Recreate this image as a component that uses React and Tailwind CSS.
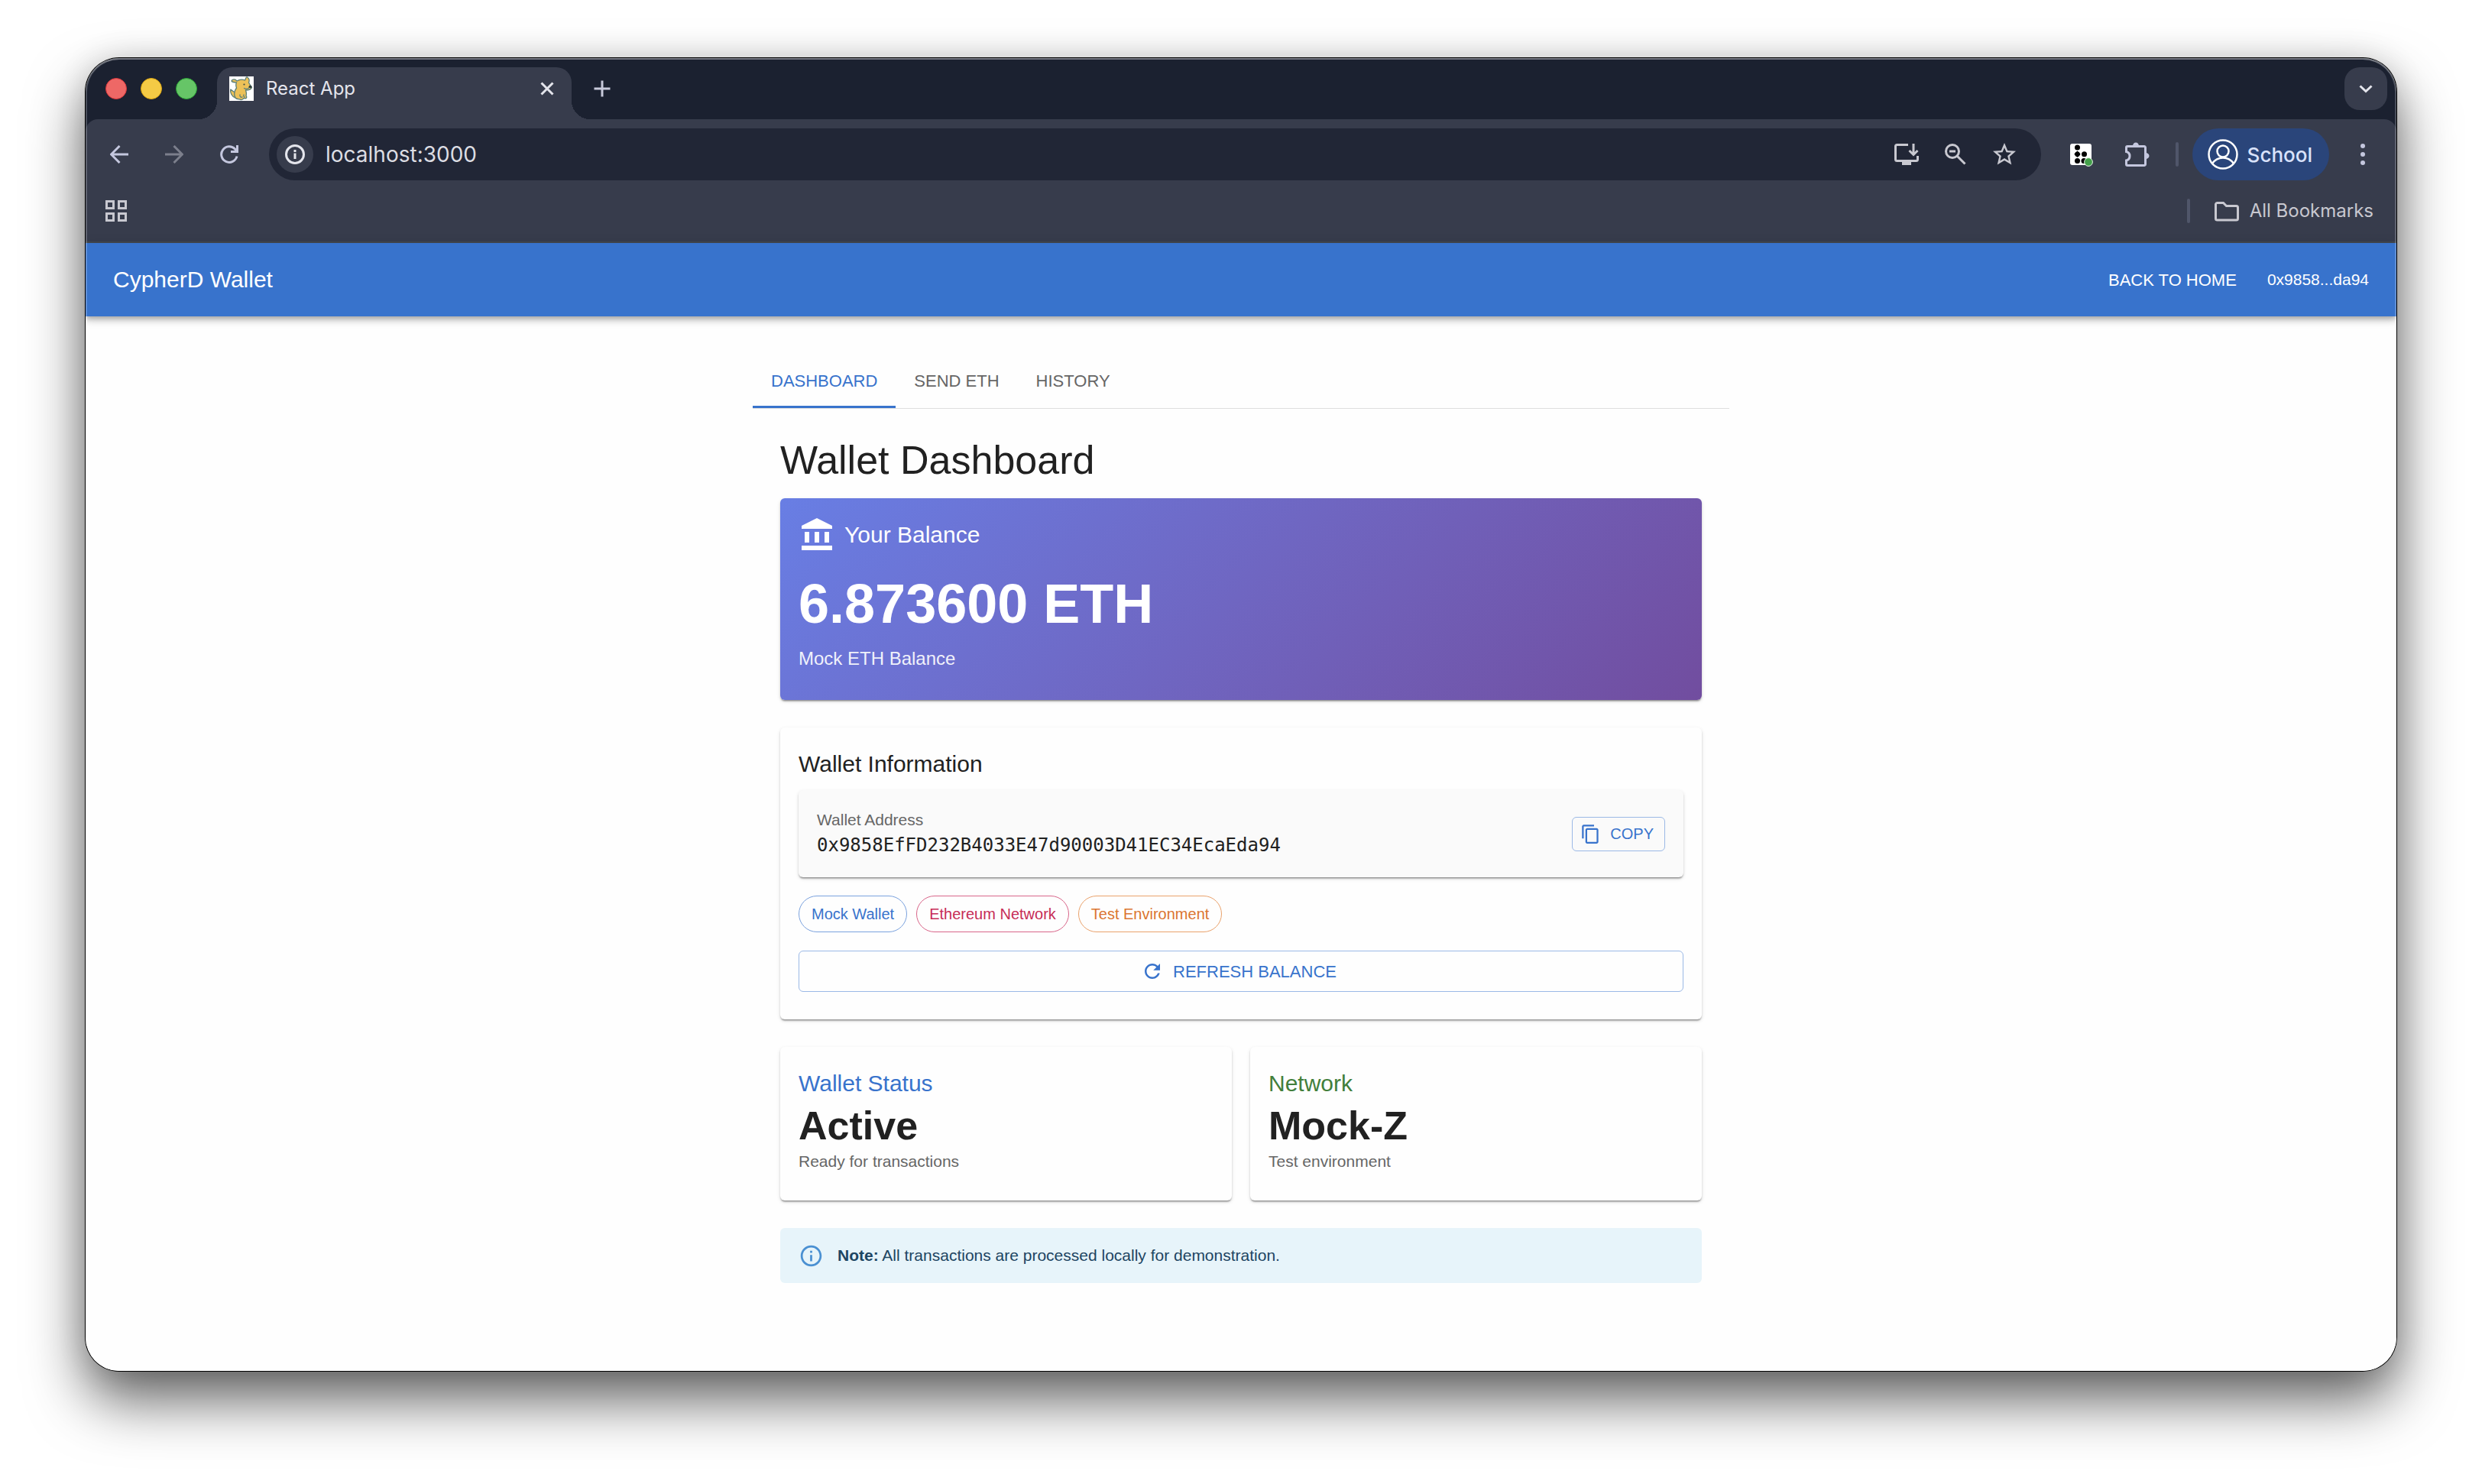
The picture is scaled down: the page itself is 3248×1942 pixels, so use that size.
import React from "react";

const ICON_BUTTON = "flex h-14 w-14 shrink-0 items-center justify-center rounded-full";
const CARD_SHADOW =
  "shadow-[0_3px_2px_-2px_rgba(0,0,0,0.3),0_2px_2px_0_rgba(0,0,0,0.16),0_2px_5px_0_rgba(0,0,0,0.12)]";

function Stroke({ size = 40, width = 3, className = "", children }) {
  return (
    <svg
      width={size}
      height={size}
      viewBox={`0 0 ${size} ${size}`}
      fill="none"
      stroke="currentColor"
      strokeWidth={width}
      className={className}
      aria-hidden="true"
    >
      {children}
    </svg>
  );
}

function Filled({ className, d }) {
  return (
    <svg viewBox="0 0 24 24" fill="currentColor" className={className} aria-hidden="true">
      <path d={d} />
    </svg>
  );
}

function PuppyIcon() {
  return (
    <svg width="32" height="32" viewBox="0 0 32 32" aria-hidden="true" className="shrink-0">
      <rect width="32" height="32" fill="#fff" />
      <g fill="#ecc158" stroke="#5b7f78" strokeWidth="1.3" strokeLinejoin="round" strokeLinecap="round">
        <path d="M8 28 C3 26 0.800 21 1.800 17 C4 18 5 21 9 20.500" />
        <path d="M10 6 C8 3 3.500 3.500 3 6 C3.500 8 7 7.500 9.500 8 C8 11 9 13 9.500 15 C6.500 19 6 24 8 28 C10 30.500 14 29.500 15 30.500 C17.500 31 18 28.500 20 28.500 C22.500 29.500 23.500 27 22 25.500 C23 22 22 20 21.500 18 C25 18 28.500 17 29.500 14.500 C28 12 26.500 10 25.500 8 C27 5 25.500 2 23.500 1 C21 0.500 22 4 20.500 5 C17 3.500 13 4 10 6 Z" />
        <path d="M14 24 C13.500 26 15 28 17 27 M19 24 C18.500 25 19 27 20 27" fill="none" />
        <path d="M19.500 15.500 C22 17 25 16.500 26 14.500" fill="none" />
      </g>
      <circle cx="19.500" cy="10.500" r="1.100" fill="#3c4a48" />
      <ellipse cx="27.500" cy="13.500" rx="2" ry="1.800" fill="#2f3d3c" />
    </svg>
  );
}

function TabStrip() {
  return (
    <div className="flex h-20 items-start bg-[#1b2130] pl-[26px] pr-3 pt-3">
      <div className="flex h-14 items-center gap-[18px]">
        <button aria-label="Close window" className="h-7 w-7 rounded-full border border-[#d9383c] bg-[#ee6866]" />
        <button aria-label="Minimize window" className="h-7 w-7 rounded-full border border-[#dba510] bg-[#f4ca45]" />
        <button aria-label="Zoom window" className="h-7 w-7 rounded-full border border-[#2ca436] bg-[#66c567]" />
      </div>
      <div className="ml-0.5 h-6 w-6 self-end bg-[radial-gradient(circle_at_0_0,transparent_24px,#373c4c_24px)]" />
      <div className="flex h-[68px] w-[464px] items-center rounded-t-[20px] bg-[#373c4c] pb-3 pl-4 pr-5">
        <PuppyIcon />
        <span className="ml-4 flex-1 text-2xl text-[#e4e5ec]">React App</span>
        <button aria-label="Close tab" className="flex h-6 w-6 items-center justify-center text-[#e4e5ec]">
          <Stroke size={24}>
            <path d="M4.500 4.500 19.500 19.500 M19.500 4.500 4.500 19.500" />
          </Stroke>
        </button>
      </div>
      <div className="h-6 w-6 self-end bg-[radial-gradient(circle_at_100%_0,transparent_24px,#373c4c_24px)]" />
      <button aria-label="New tab" className="flex h-14 w-8 items-center justify-center text-[#c8cadb]">
        <Stroke size={24}>
          <path d="M12 1.500V22.500 M1.500 12H22.500" />
        </Stroke>
      </button>
      <button
        aria-label="Search tabs"
        className="ml-auto flex h-14 w-14 items-center justify-center rounded-[20px] bg-[#373c4c] text-[#e4e5ec]"
      >
        <Stroke size={24}>
          <path d="M4.500 8.500 12 15.500 19.500 8.500" />
        </Stroke>
      </button>
    </div>
  );
}

function Toolbar() {
  return (
    <div className="bg-[#1b2130]">
      <div className="flex items-center rounded-t-[16px] bg-[#373c4c] px-4 pt-3">
        <div className="flex gap-4">
          <button aria-label="Back" className={`${ICON_BUTTON} text-[#c4c7de]`}>
            <Stroke size={24}>
              <path d="M24 12H2 M12.500 1 1.500 12 12.500 23" />
            </Stroke>
          </button>
          <button aria-label="Forward" className={`${ICON_BUTTON} text-[#7c7f8c]`}>
            <Stroke size={24}>
              <path d="M0 12H22 M11.500 1 22.500 12 11.500 23" />
            </Stroke>
          </button>
          <button aria-label="Reload" className={`${ICON_BUTTON} text-[#c4c7de]`}>
            <Stroke size={24}>
              <path d="M22 14.500 A10.300 10.300 0 1 1 19.500 5 L22 8 M22.500 0 V8.500 H14" />
            </Stroke>
          </button>
        </div>
        <div className="ml-6 flex h-[68px] flex-1 items-center rounded-full bg-[#212636] pl-2.5 pr-7 text-[#c8c8d0]">
          <button
            aria-label="View site information"
            className="flex h-12 w-12 shrink-0 items-center justify-center rounded-full bg-[#373c4c] text-[#e4e5ec]"
          >
            <Stroke size={28}>
              <circle cx="14" cy="14" r="11.500" />
              <path d="M14 12.500V20 M14 8V11" />
            </Stroke>
          </button>
          <input
            aria-label="Address and search bar"
            defaultValue="localhost:3000"
            className="ml-4 min-w-0 flex-1 bg-transparent text-[28px] text-[#dcdde3] outline-none"
          />
          <div className="flex items-center gap-6">
            <button aria-label="Install app">
              <Stroke>
                <path d="M22 7.500H7.500a2 2 0 0 0-2 2V26.500a2 2 0 0 0 2 2H32.500a2 2 0 0 0 2-2V22" />
                <path d="M29 6V20 M23.500 15 29 20.500 34.500 15" />
                <path d="M14 29H26V34H14Z" fill="currentColor" stroke="none" />
              </Stroke>
            </button>
            <button aria-label="Zoom level">
              <Stroke>
                <circle cx="16" cy="16" r="8.500" />
                <path d="M22 22 32.500 32.500 M12 16H20" />
              </Stroke>
            </button>
            <button aria-label="Bookmark this page" className="flex h-10 w-10 items-center justify-center">
              <Filled
                className="h-9 w-9"
                d="m22 9.240-7.190-.620L12 2 9.190 8.630 2 9.240l5.460 4.730L5.820 21 12 17.270 18.180 21l-1.630-7.030L22 9.240zM12 15.400l-3.760 2.270 1-4.280-3.320-2.880 4.380-.380L12 6.100l1.710 4.040 4.380.380-3.320 2.880 1 4.280L12 15.400z"
              />
            </button>
          </div>
        </div>
        <button aria-label="Dots extension" className={`${ICON_BUTTON} ml-6`}>
          <svg width="32" height="32" viewBox="-2 -2 32 32" aria-hidden="true">
            <rect width="28" height="28" rx="3" fill="#fff" />
            <g fill="#000">
              <circle cx="9.500" cy="5" r="3.500" />
              <path d="M9.500 9.500 13.700 13.700 9.500 17.900 5.300 13.700Z" />
              <circle cx="9.500" cy="13.700" r="3.200" />
              <circle cx="18.500" cy="13.700" r="3.500" />
              <circle cx="9.500" cy="22.500" r="3.500" />
              <circle cx="18" cy="22.500" r="3.500" />
            </g>
            <circle cx="24" cy="24" r="5.400" fill="#43a04a" stroke="#e6f4e6" />
          </svg>
        </button>
        <button aria-label="Extensions" className={`${ICON_BUTTON} ml-[18px] text-[#c4c7de]`}>
          <Stroke size={32}>
            <path d="M1.500 12.500V7a1.500 1.500 0 0 1 1.500-1.500H25A1.500 1.500 0 0 1 26.500 7V29A1.500 1.500 0 0 1 25 30.500H3A1.500 1.500 0 0 1 1.500 29V24C7.500 22.500 7.500 14 1.500 12.500Z" />
            <path d="M10 5a4 4.500 0 0 1 8 0ZM27 14a4.500 4 0 0 1 0 8Z" fill="currentColor" stroke="none" />
          </Stroke>
        </button>
        <div className="ml-[22px] h-8 w-1 rounded-full bg-[#50566a]" />
        <button className="ml-[18px] flex h-[68px] items-center gap-3 rounded-full bg-[#2a457a] pl-5 pr-[22px] text-[#d9e2fb]">
          <Stroke width={2.5} className="text-white">
            <circle cx="20" cy="20" r="18.500" />
            <circle cx="20" cy="16" r="7.500" />
            <path d="M6 32 C13 22 27 22 34 32" />
          </Stroke>
          <span className="text-[26px] font-medium">School</span>
        </button>
        <button aria-label="Menu" className={`${ICON_BUTTON} ml-4 text-[#c4c7de]`}>
          <svg width="6" height="30" viewBox="0 0 6 30" fill="currentColor" aria-hidden="true">
            <circle cx="3" cy="4" r="3" />
            <circle cx="3" cy="15" r="3" />
            <circle cx="3" cy="26" r="3" />
          </svg>
        </button>
      </div>
      <div className="flex h-[82px] items-center border-b-2 border-[#444950] bg-[#373c4c] pl-[26px] pr-[30px] text-[#c8c8d0]">
        <button aria-label="Apps">
          <Stroke size={28}>
            <path d="M1.500 1.500H10.500V10.500H1.500Z M17.500 1.500H26.500V10.500H17.500Z M1.500 17.500H10.500V26.500H1.500Z M17.500 17.500H26.500V26.500H17.500Z" />
          </Stroke>
        </button>
        <div className="ml-auto h-8 w-1 rounded-full bg-[#50566a]" />
        <button className="ml-8 flex items-center gap-3.5 text-2xl">
          <Stroke size={32}>
            <path d="M1.500 7A2 2 0 0 1 3.500 5.500H11.500L15.500 9.500H28.500A2 2 0 0 1 30.500 11.500V26A2 2 0 0 1 28.500 28H3.500A2 2 0 0 1 1.500 26Z" />
          </Stroke>
          All Bookmarks
        </button>
      </div>
    </div>
  );
}

function AppBar() {
  return (
    <header className="relative flex h-24 items-center bg-[#3873cc] px-9 text-white shadow-[0_3px_6px_-1px_rgba(0,0,0,0.2),0_6px_8px_0_rgba(0,0,0,0.14),0_2px_15px_0_rgba(0,0,0,0.12)]">
      <h1 className="flex-1 text-[30px] leading-[48px]">CypherD Wallet</h1>
      <button className="px-3 text-[22px]">BACK TO HOME</button>
      <span className="ml-7 text-[21px]">0x9858...da94</span>
    </header>
  );
}

function Tabs() {
  return (
    <div role="tablist" className="flex h-[73px] border-b border-[#dfdfdf] text-[22px] text-[#666]">
      <button role="tab" aria-selected="true" className="border-b-[3px] border-[#3873cc] px-6 pt-[3px] text-[#3873cc]">
        DASHBOARD
      </button>
      <button role="tab" aria-selected="false" className="px-6">
        SEND ETH
      </button>
      <button role="tab" aria-selected="false" className="px-6">
        HISTORY
      </button>
    </div>
  );
}

function BalanceCard() {
  return (
    <section
      className={`rounded-md bg-linear-135 from-[#687ee4] to-[#714d9f] px-6 pb-9 pt-6 text-white ${CARD_SHADOW}`}
    >
      <div className="flex items-center gap-3">
        <Filled
          className="h-12 w-12"
          d="M4 10h3v7H4zM10.500 10h3v7h-3zM2 19h20v3H2zM17 10h3v7h-3zM12 1 2 6v2h20V6z"
        />
        <h3 className="text-[30px] leading-[48px]">Your Balance</h3>
      </div>
      <p className="mt-6 text-[72px] font-bold leading-[84px]">6.873600 ETH</p>
      <p className="mt-3 text-2xl leading-9 opacity-90">Mock ETH Balance</p>
    </section>
  );
}

function InfoCard() {
  return (
    <section className={`mt-9 rounded-md bg-[#fefefe] px-6 pb-9 pt-6 ${CARD_SHADOW}`}>
      <h3 className="text-[30px] leading-[48px]">Wallet Information</h3>
      <div className={`mt-2.5 flex items-center justify-between rounded-md bg-[#fafafa] p-6 ${CARD_SHADOW}`}>
        <div>
          <p className="text-[21px] leading-[30px] text-[#666]">Wallet Address</p>
          <p className="font-['DejaVu_Sans_Mono',monospace] text-2xl leading-9">
            0x9858EfFD232B4033E47d90003D41EC34EcaEda94
          </p>
        </div>
        <button className="flex h-[45px] items-center gap-3 rounded-md border border-[#9bb9e6] pl-2.5 pr-3.5 text-xl text-[#3873cc]">
          <Filled
            className="h-[27px] w-[27px]"
            d="M16 1H4c-1.100 0-2 .900-2 2v14h2V3h12V1zm3 4H8c-1.100 0-2 .900-2 2v14c0 1.100.900 2 2 2h11c1.100 0 2-.900 2-2V7c0-1.100-.900-2-2-2zm0 16H8V7h11v14z"
          />
          COPY
        </button>
      </div>
      <div className="mt-6 flex gap-3 text-xl">
        <span className="flex h-12 items-center rounded-full border border-[#7ba2de] px-4 text-[#3873cc]">
          Mock Wallet
        </span>
        <span className="flex h-12 items-center rounded-full border border-[#d9668a] px-4 text-[#c72c56]">
          Ethereum Network
        </span>
        <span className="flex h-12 items-center rounded-full border border-[#eaa26c] px-4 text-[#db7530]">
          Test Environment
        </span>
      </div>
      <button className="mt-6 flex h-[54px] w-full items-center justify-center gap-3 rounded-md border border-[#9bb9e6] pr-1.5 text-[22px] text-[#3873cc]">
        <Filled
          className="h-[30px] w-[30px]"
          d="M17.650 6.350C16.200 4.900 14.210 4 12 4c-4.420 0-7.990 3.580-7.990 8s3.570 8 7.990 8c3.730 0 6.840-2.550 7.730-6h-2.080c-.820 2.330-3.040 4-5.650 4-3.310 0-6-2.690-6-6s2.690-6 6-6c1.660 0 3.140.690 4.220 1.780L13 11h7V4l-2.350 2.350z"
        />
        REFRESH BALANCE
      </button>
    </section>
  );
}

function StatCard({ title, titleClass, value, note }) {
  return (
    <section className={`flex-1 rounded-md bg-[#fefefe] px-6 pb-9 pt-6 ${CARD_SHADOW}`}>
      <h3 className={`text-[30px] leading-[48px] ${titleClass}`}>{title}</h3>
      <p className="text-[52px] font-bold leading-[63px]">{value}</p>
      <p className="text-[21px] leading-[30px] text-[#666]">{note}</p>
    </section>
  );
}

export default function App() {
  return (
    <div className="flex min-h-screen flex-col bg-white px-28 pb-[148px] pt-[76px] font-['Liberation_Sans',Arial,sans-serif]">
      <div className="relative flex flex-1 flex-col overflow-hidden rounded-[44px] shadow-[0_0_0_1px_#000,0_38px_76px_rgba(0,0,0,0.62),0_0_40px_rgba(0,0,0,0.12)]">
        <div className="font-[Inter,sans-serif]">
          <TabStrip />
          <Toolbar />
        </div>
        <AppBar />
        <main className="flex-1 bg-[#fefefe] px-9 pt-12 text-[#212121]">
          <div className="mx-auto max-w-[1278px]">
            <Tabs />
            <div className="p-9">
              <h2 className="mb-[18px] text-[52px] leading-[63px]">Wallet Dashboard</h2>
              <BalanceCard />
              <InfoCard />
              <div className="mt-9 flex gap-6">
                <StatCard
                  title="Wallet Status"
                  titleClass="text-[#3873cc]"
                  value="Active"
                  note="Ready for transactions"
                />
                <StatCard
                  title="Network"
                  titleClass="text-[#427f3b]"
                  value="Mock-Z"
                  note="Test environment"
                />
              </div>
              <div
                role="alert"
                className="mt-9 flex h-[72px] items-center gap-[18px] rounded-md bg-[#e7f4fa] px-6 text-[21px] text-[#1d4562]"
              >
                <Filled
                  className="h-[33px] w-[33px] text-[#4a90d2]"
                  d="M11 7h2v2h-2zm0 4h2v6h-2zm1-9C6.480 2 2 6.480 2 12s4.480 10 10 10 10-4.480 10-10S17.520 2 12 2zm0 18c-4.410 0-8-3.590-8-8s3.590-8 8-8 8 3.590 8 8-3.590 8-8 8z"
                />
                <p>
                  <strong>Note:</strong> All transactions are processed locally for demonstration.
                </p>
              </div>
            </div>
          </div>
        </main>
        <div className="pointer-events-none absolute inset-0 rounded-[44px] shadow-[inset_0_0_0_2px_rgba(255,255,255,0.2),inset_0_2px_0_0_rgba(255,255,255,0.25)]" />
      </div>
    </div>
  );
}
